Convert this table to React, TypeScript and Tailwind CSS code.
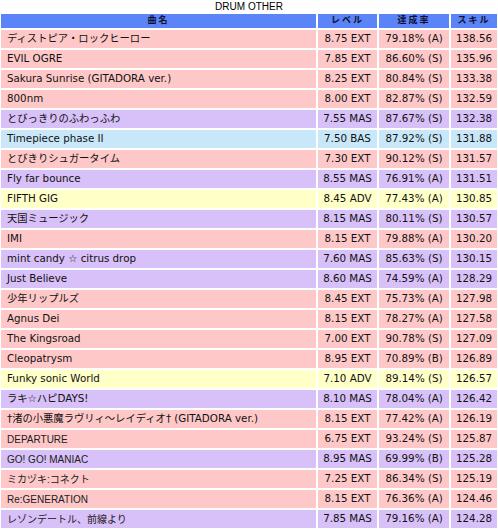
const rows: [string, string, string, string, string, boolean?][] = [
  ['ディストピア・ロックヒーロー', '8.75 EXT', '79.18% (A)', '138.56', 'pink'],
  ['EVIL OGRE', '7.85 EXT', '86.60% (S)', '135.96', 'pink'],
  ['Sakura Sunrise (GITADORA ver.)', '8.25 EXT', '80.84% (S)', '133.38', 'pink'],
  ['800nm', '8.00 EXT', '82.87% (S)', '132.59', 'pink'],
  ['とびっきりのふわっふわ', '7.55 MAS', '87.67% (S)', '132.38', 'purple'],
  ['Timepiece phase II', '7.50 BAS', '87.92% (S)', '131.88', 'blue'],
  ['とびきりシュガータイム', '7.30 EXT', '90.12% (S)', '131.57', 'pink'],
  ['Fly far bounce', '8.55 MAS', '76.91% (A)', '131.51', 'purple'],
  ['FIFTH GIG', '8.45 ADV', '77.43% (A)', '130.85', 'yellow'],
  ['天国ミュージック', '8.15 MAS', '80.11% (S)', '130.57', 'purple'],
  ['IMI', '8.15 EXT', '79.88% (A)', '130.20', 'pink'],
  ['mint candy ☆ citrus drop', '7.60 MAS', '85.63% (S)', '130.15', 'purple'],
  ['Just Believe', '8.60 MAS', '74.59% (A)', '128.29', 'purple'],
  ['少年リップルズ', '8.45 EXT', '75.73% (A)', '127.98', 'pink'],
  ['Agnus Dei', '8.15 EXT', '78.27% (A)', '127.58', 'pink'],
  ['The Kingsroad', '7.00 EXT', '90.78% (S)', '127.09', 'pink'],
  ['Cleopatrysm', '8.95 EXT', '70.89% (B)', '126.89', 'pink'],
  ['Funky sonic World', '7.10 ADV', '89.14% (S)', '126.57', 'yellow'],
  ['ラキ☆ハピDAYS!', '8.10 MAS', '78.04% (A)', '126.42', 'purple'],
  ['†渚の小悪魔ラヴリィ～レイディオ† (GITADORA ver.)', '8.15 EXT', '77.42% (A)', '126.19', 'pink'],
  ['DEPARTURE', '6.75 EXT', '93.24% (S)', '125.87', 'pink', true],
  ['GO! GO! MANIAC', '8.95 MAS', '69.99% (B)', '125.28', 'purple', true],
  ['ミカヅキ:コネクト', '7.25 EXT', '86.34% (S)', '125.19', 'pink', true],
  ['Re:GENERATION', '8.15 EXT', '76.36% (A)', '124.46', 'pink', true],
  ['レゾンデートル、前線より', '7.85 MAS', '79.16% (A)', '124.28', 'purple', true],
]

const bg: Record<string, string> = {
  pink: 'bg-[#ffc8c8]',
  purple: 'bg-[#d8c0f8]',
  blue: 'bg-[#c8e8fa]',
  yellow: 'bg-[#ffffc8]',
}

const verdana = 'font-["DejaVu_Sans","Noto_Sans_CJK_JP",sans-serif]'
const arial = 'font-["Liberation_Sans","Noto_Sans_CJK_JP",sans-serif]'

export default function App() {
  return (
    <div className="w-[498px] bg-white text-black">
      {/* caption */}
      <div className={`h-[14px] text-center text-[10px] leading-[13px] ${arial}`}>DRUM OTHER</div>

      <div className={`grid grid-cols-[315px_59px_70px_46px] gap-[2px] px-[1px] text-[10.3px] text-[#111] ${verdana}`}>
        {['曲名', 'レベル', '達成率', 'スキル'].map((h) => (
          <div key={h} className="h-[14px] bg-[#5a84f8] flex items-center justify-center font-bold text-[9px] tracking-[2px] text-[#101030]">
            {h}
          </div>
        ))}

        {rows.map(([name, level, rate, skill, color, alt], i) => (
          <div key={i} className="contents">
            <div className={`h-[18px] ${bg[color]} flex items-center pl-[6px] whitespace-nowrap overflow-hidden ${alt ? `${arial} text-[10px] text-[#202020]` : ''}`}>
              {name}
            </div>
            <div className={`h-[18px] ${bg[color]} flex items-center justify-center`}>{level}</div>
            <div className={`h-[18px] ${bg[color]} flex items-center justify-center`}>{rate}</div>
            <div className={`h-[18px] ${bg[color]} flex items-center justify-center`}>{skill}</div>
          </div>
        ))}
      </div>
    </div>
  )
}
